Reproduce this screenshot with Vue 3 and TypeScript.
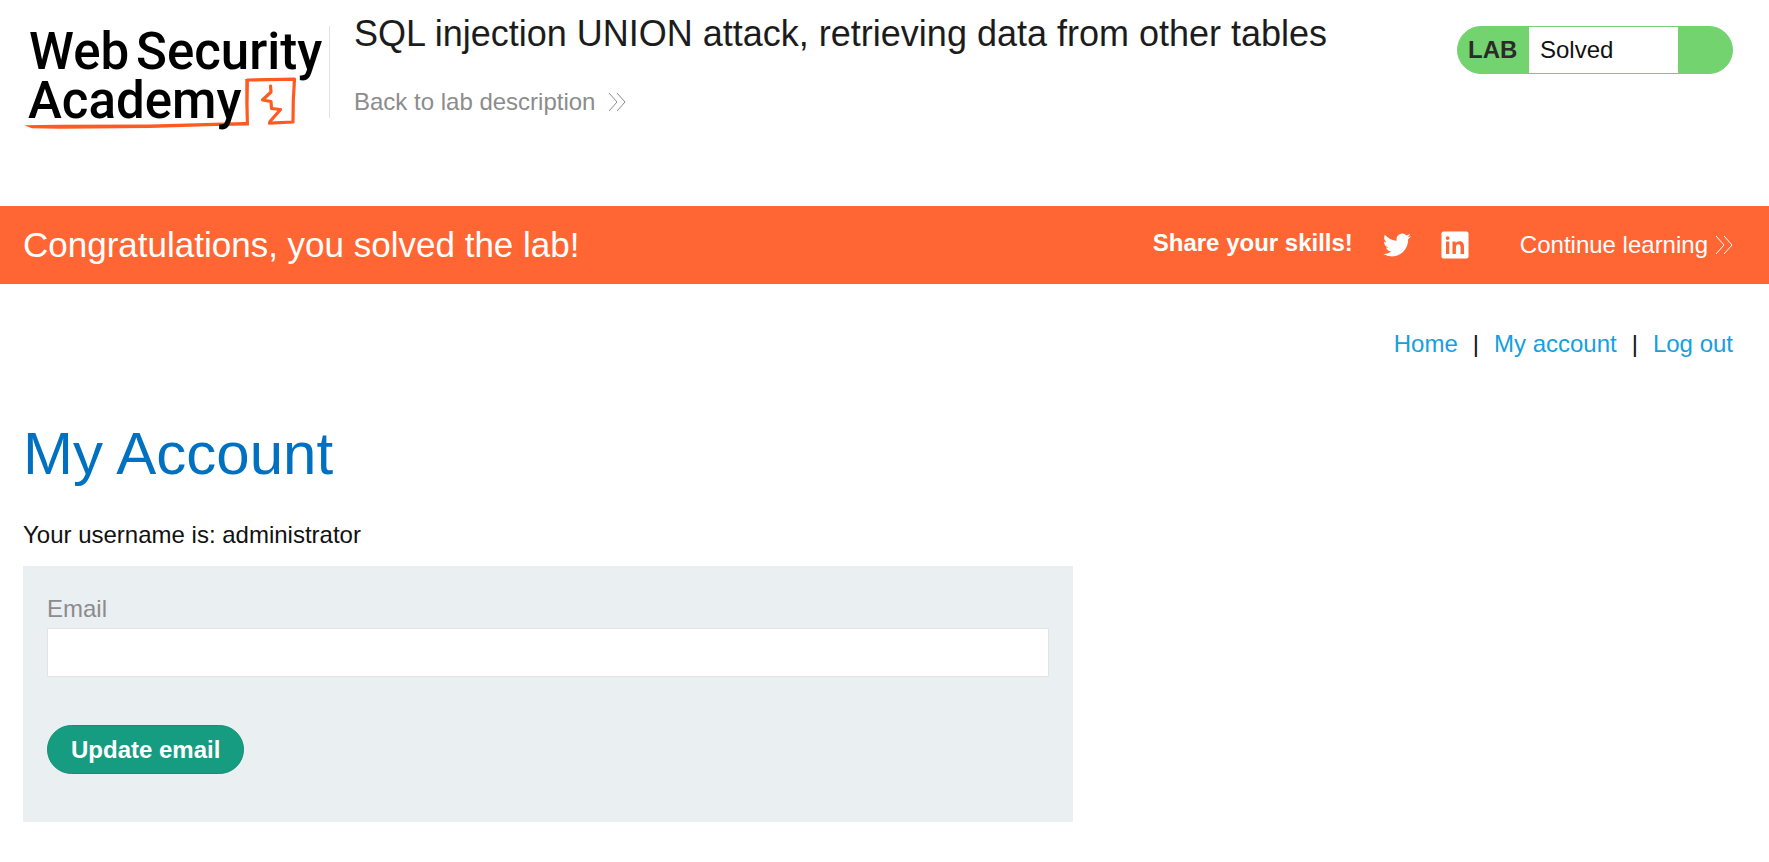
<script setup lang="ts">
import { ref } from 'vue'

interface NavLink {
  label: string
  href: string
}

const username = 'administrator'
const email = ref('')
const links: NavLink[] = [
  { label: 'Home', href: '#home' },
  { label: 'My account', href: '#my-account' },
  { label: 'Log out', href: '#logout' },
]
</script>

<template>
  <div class="page">
    <header class="header">
      <a class="logo" href="#academy" aria-label="Web Security Academy">
        <svg width="300" height="106" viewBox="23 24 300 106">
          <path d="M24 125.300L60 124.800L150 124.500L215 122.800L245.800 122L245.300 104L245.300 79L249 79L248.600 104L249 125.500L215 126L150 128L60 128.700L32 128.200Z" fill="#ff5a1f" />
          <path d="M247.300 80L294.500 79.200L293.300 100L293 122L269.500 123.200" fill="none" stroke="#ff5a1f" stroke-width="3.200" stroke-linejoin="round" stroke-linecap="round" />
          <path d="M270.500 86L271 92L262.500 100L271 101.500L271.500 108.500L280.500 109.500L270 121.500" fill="none" stroke="#ff5a1f" stroke-width="3.200" stroke-linejoin="round" stroke-linecap="round" />
          <text class="wordmark" x="29" y="69">Web</text>
          <text class="wordmark" x="136" y="69">Security</text>
          <text class="wordmark" x="28" y="118">Academy</text>
        </svg>
      </a>
      <div class="heading">
        <h2>SQL injection UNION attack, retrieving data from other tables</h2>
        <a class="back" href="#lab">
          <span>Back to lab description</span>
          <svg width="18" height="20" viewBox="0 0 18 20" fill="none" stroke="currentColor">
            <path d="M1 1L9 10L1 19M9 1L17 10L9 19" />
          </svg>
        </a>
      </div>
      <div class="status">
        <span class="tag">LAB</span>
        <span class="state">Solved</span>
      </div>
    </header>

    <section class="banner">
      <h4>Congratulations, you solved the lab!</h4>
      <div class="share">
        <strong>Share your skills!</strong>
        <a class="social" href="#twitter" aria-label="Share on Twitter">
          <svg width="28" height="28" viewBox="0 0 24 24" fill="#fff">
            <path d="M23.950 4.570a10 10 0 0 1-2.820.770 4.960 4.960 0 0 0 2.160-2.720c-.95.550-2 .96-3.130 1.180a4.920 4.920 0 0 0-8.380 4.480C7.690 8.090 4.070 6.130 1.640 3.160a4.820 4.820 0 0 0-.67 2.480c0 1.710.87 3.210 2.190 4.100a4.900 4.900 0 0 1-2.230-.62v.060a4.920 4.920 0 0 0 3.950 4.830 5 5 0 0 1-2.210.080 4.940 4.940 0 0 0 4.600 3.420A9.870 9.870 0 0 1 0 19.540a14 14 0 0 0 7.550 2.210c9.050 0 14-7.500 14-13.980 0-.21 0-.42-.02-.63a9.940 9.940 0 0 0 2.460-2.550z" />
          </svg>
        </a>
        <a class="social" href="#linkedin" aria-label="Share on LinkedIn">
          <svg width="28" height="28" viewBox="0 0 28 28">
            <rect x="0.500" y="0.500" width="27" height="27" rx="2" fill="#fff" />
            <path d="M5 10.500H8.300V23H5ZM6.650 5.200A1.900 1.900 0 1 1 6.650 9A1.900 1.900 0 1 1 6.650 5.200ZM11.500 10.500H14.600V12.300C15.400 11 16.700 10.200 18.400 10.200C22 10.200 23 12.600 23 16V23H19.600V16.800C19.600 14.900 19.200 13.300 17.400 13.300C15.400 13.300 14.900 14.900 14.900 16.800V23H11.500Z" fill="#f63" />
          </svg>
        </a>
        <a class="continue" href="#continue">
          <span>Continue learning</span>
          <svg width="18" height="20" viewBox="0 0 18 20" fill="none" stroke="currentColor">
            <path d="M1 1L9 10L1 19M9 1L17 10L9 19" />
          </svg>
        </a>
      </div>
    </section>

    <main class="content">
      <nav class="nav">
        <template v-for="(link, i) in links" :key="link.href">
          <span v-if="i > 0">|</span>
          <a :href="link.href">{{ link.label }}</a>
        </template>
      </nav>
      <h1>My Account</h1>
      <p>Your username is: {{ username }}</p>
      <form @submit.prevent>
        <label for="email">Email</label>
        <input id="email" v-model="email" type="email" />
        <button type="submit">Update email</button>
      </form>
    </main>
  </div>
</template>

<style>
body {
  margin: 0;
  background: #fff;
}
</style>

<style scoped>
.page {
  font-family: "Liberation Sans", Arial, sans-serif;
  font-size: 24px;
  line-height: 28px;
  color: #111;
}
a {
  text-decoration: none;
}
svg {
  display: block;
}
h1, h2, h4, p {
  margin: 0;
  font-weight: 400;
}
.header {
  display: flex;
  align-items: flex-start;
  box-sizing: border-box;
  min-height: 206px;
  padding: 14px 36px 0 23px;
}
.logo {
  height: 92px;
  margin-top: 12px;
  padding-right: 6px;
  border-right: 1px solid #e3e3e3;
}
.logo svg {
  margin-top: -2px;
  overflow: visible;
}
.wordmark {
  font-family: Roboto, sans-serif;
  font-size: 51px;
  font-weight: 500;
  fill: #000;
}
.heading {
  flex: 1;
  padding-left: 24px;
}
h2 {
  font-size: 36px;
  line-height: 40px;
  color: #1c1c1c;
}
.back {
  display: inline-flex;
  align-items: center;
  gap: 13px;
  margin-top: 34px;
  color: #8c8c8c;
}
.status {
  display: flex;
  box-sizing: border-box;
  width: 276px;
  height: 48px;
  margin-top: 12px;
  overflow: hidden;
  border: 1px solid #72d36f;
  border-radius: 24px;
  background: #72d36f;
  line-height: 46px;
}
.tag {
  width: 61px;
  padding-left: 10px;
  font-weight: 700;
  color: #2b2b2b;
}
.state {
  width: 138px;
  padding-left: 11px;
  background: #fff;
}
.banner {
  display: flex;
  align-items: center;
  justify-content: space-between;
  min-height: 78px;
  padding: 0 36px 0 23px;
  background: #f63;
  color: #fff;
}
h4 {
  font-size: 35px;
  line-height: 40px;
}
.share {
  display: flex;
  align-items: center;
}
.share strong {
  padding-bottom: 4px;
}
.social {
  margin-left: 30px;
  padding-bottom: 1px;
}
.continue {
  display: flex;
  align-items: center;
  gap: 7px;
  margin-left: 51px;
  color: #fff;
}
.content {
  padding: 46px 36px 40px 23px;
}
.nav {
  display: flex;
  justify-content: flex-end;
  gap: 15px;
}
.nav a {
  color: #14a0e0;
}
h1 {
  margin: 62px 0 33px;
  font-size: 60px;
  line-height: 68px;
  color: #0070c0;
}
form {
  display: flex;
  flex-direction: column;
  align-items: flex-start;
  box-sizing: border-box;
  max-width: 1050px;
  margin-top: 17px;
  padding: 29px 24px 48px;
  background: #eaeff2;
}
label {
  color: #8c8c8c;
}
input {
  box-sizing: border-box;
  width: 100%;
  height: 49px;
  margin: 5px 0 48px;
  padding: 0 12px;
  border: 1px solid #e3e3e3;
  border-radius: 0;
  background: #fff;
  font: inherit;
}
button {
  height: 49px;
  padding: 0 23px;
  border: 1px solid #0e9072;
  border-radius: 25px;
  background: #169c80;
  color: #fff;
  font: inherit;
  font-weight: 700;
}
</style>
